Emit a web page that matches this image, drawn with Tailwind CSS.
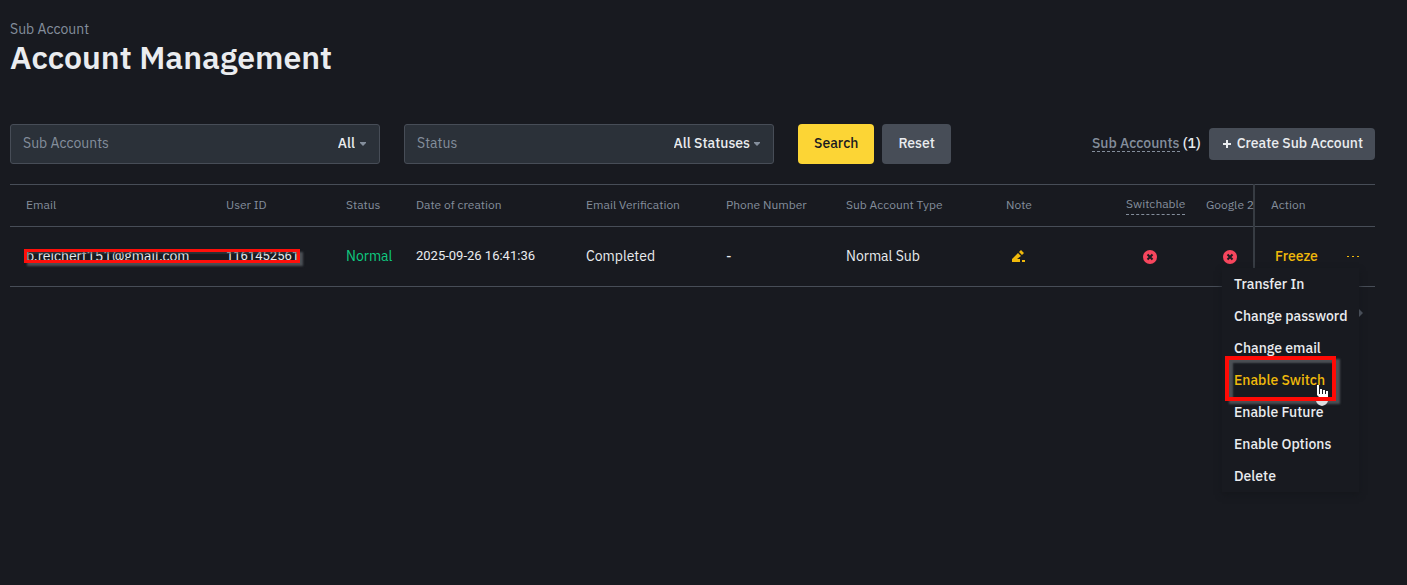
<!DOCTYPE html>
<html lang="en">
  <head>
    <meta charset="UTF-8" />
    <meta name="viewport" content="width=device-width, initial-scale=1.0" />
    <script src="https://cdn.jsdelivr.net/npm/@tailwindcss/browser@4"></script>
    <title>Account Management</title>
  </head>
  <body
    class="min-h-screen bg-[#181a20] pt-5 pr-8 pb-8 pl-[10px] font-['IBM_Plex_Sans',Roboto,sans-serif] text-sm text-[#eaecef]"
  >
    <header>
      <p class="leading-[18px] text-[#848e9c]">Sub Account</p>
      <h1 class="text-[32px] leading-[38px] font-semibold">
        Account Management
      </h1>
    </header>

    <!-- Filters -->
    <div class="mt-12 flex items-start justify-between">
      <form class="flex" onsubmit="return false">
        <div
          class="mr-6 flex h-10 w-[370px] items-center justify-between rounded-[3px] border border-[#474d57] bg-[#2b3139] px-3 pb-0.5"
        >
          <label for="sub-accounts" class="text-[#848e9c]">Sub Accounts</label>
          <div class="flex items-center gap-1">
            <select
              id="sub-accounts"
              class="field-sizing-content appearance-none bg-transparent font-medium"
            >
              <option>All</option>
            </select>
            <svg class="mt-0.5 h-1 w-2 fill-[#848e9c]" viewBox="0 0 8 4">
              <path d="M1 0h6v1L4 4 1 1z" />
            </svg>
          </div>
        </div>
        <div
          class="mr-6 flex h-10 w-[370px] items-center justify-between rounded-[3px] border border-[#474d57] bg-[#2b3139] px-3 pb-0.5"
        >
          <label for="status" class="text-[#848e9c]">Status</label>
          <div class="flex items-center gap-[3px]">
            <select
              id="status"
              class="field-sizing-content appearance-none bg-transparent font-medium"
            >
              <option>All Statuses</option>
            </select>
            <svg class="mt-0.5 h-1 w-2 fill-[#848e9c]" viewBox="0 0 8 4">
              <path d="M1 0h6v1L4 4 1 1z" />
            </svg>
          </div>
        </div>
        <button
          type="submit"
          class="mr-2 h-10 rounded bg-[#fcd535] px-4 pb-0.5 font-medium text-[#181a20]"
        >
          Search
        </button>
        <button
          type="reset"
          class="h-10 rounded bg-[#474d57] px-4 pb-0.5 font-medium"
        >
          Reset
        </button>
      </form>
      <div class="mt-1 flex h-8 items-center">
        <p class="mr-2 pb-0.5 leading-4 font-medium">
          <span
            class="inline-block border-b border-dashed border-[#848e9c] text-[#848e9c]"
            >Sub Accounts</span
          >
          (1)
        </p>
        <button
          class="flex h-8 items-center gap-1 rounded bg-[#474d57] px-3 pb-0.5 font-medium"
        >
          <svg
            class="mt-0.5 h-3 w-3 stroke-[#eaecef] stroke-2"
            viewBox="0 0 12 12"
          >
            <path d="M6 2v8M2 6h8" />
          </svg>
          Create Sub Account
        </button>
      </div>
    </div>

    <!-- Accounts table -->
    <div class="relative mt-5">
      <table class="w-full table-fixed border-y border-[#474d57] text-left">
        <colgroup>
          <col />
          <col class="w-[120px]" />
          <col class="w-[70px]" />
          <col class="w-[170px]" />
          <col class="w-[140px]" />
          <col class="w-[120px]" />
          <col class="w-[160px]" />
          <col class="w-[120px]" />
          <col class="w-[80px]" />
          <col class="w-[64px]" />
          <col class="w-[121px]" />
        </colgroup>
        <thead class="text-xs text-[#848e9c]">
          <tr class="h-[42px] border-b border-[#474d57]">
            <th class="pb-0.5 pl-4 font-normal">Email</th>
            <th class="pb-0.5 pl-4 font-normal">User ID</th>
            <th class="pb-0.5 pl-4 font-normal">Status</th>
            <th class="pb-0.5 pl-4 font-normal">Date of creation</th>
            <th class="pb-0.5 pl-4 font-normal">Email Verification</th>
            <th class="pb-0.5 pl-4 font-normal">Phone Number</th>
            <th class="pb-0.5 pl-4 font-normal">Sub Account Type</th>
            <th class="pb-0.5 pl-4 font-normal">Note</th>
            <th class="pl-4 font-normal">
              <span
                class="inline-block border-b border-dashed border-[#848e9c] pb-0.5"
                >Switchable</span
              >
            </th>
            <th class="pb-0.5 pl-4 font-normal whitespace-nowrap">Google 2</th>
            <th class="border-l-2 border-[#373c43] pb-0.5 pl-4 font-normal">
              Action
            </th>
          </tr>
        </thead>
        <tbody>
          <tr class="h-[60px]">
            <td class="relative pb-0.5 pl-4">
              b.reichert151@gmail.com
              <!-- Red marker over the email and the user id -->
              <div
                class="absolute top-[22px] left-[14px] z-10 h-[14px] w-[276px] border-3 border-[#ff0f0a] shadow-[3px_3px_2px_#4b5055,inset_2px_2px_1px_#3f464a80]"
              ></div>
            </td>
            <td class="pl-4 font-[Roboto] text-[13px]">1161452561</td>
            <td class="pb-0.5 pl-4 text-[#0ecb81]">Normal</td>
            <td class="pl-4 font-[Roboto] text-[13px]">2025-09-26 16:41:36</td>
            <td class="pb-0.5 pl-4">Completed</td>
            <td class="pb-0.5 pl-4">-</td>
            <td class="pb-0.5 pl-4">Normal Sub</td>
            <td class="pl-[22px]">
              <button aria-label="Edit note" class="block">
                <svg class="h-[13px] w-[13px] fill-[#f0b90b]" viewBox="0 0 13 13">
                  <path d="M0 9 6 3l3 3-4 3v3H0zM7 2l2-2 3 3-2 2zM5 9h3v3H5zM10 10h3v2h-3z" />
                </svg>
              </button>
            </td>
            <td class="pl-[33px]">
              <svg class="h-[14px] w-[14px]" viewBox="0 0 14 14">
                <circle cx="7" cy="7" r="7" fill="#f6465d" />
                <path d="m4.5 4.5 5 5m0-5-5 5" stroke="#181a20" stroke-width="2" />
              </svg>
            </td>
            <td class="pl-[33px]">
              <svg class="h-[14px] w-[14px]" viewBox="0 0 14 14">
                <circle cx="7" cy="7" r="7" fill="#f6465d" />
                <path d="m4.5 4.5 5 5m0-5-5 5" stroke="#181a20" stroke-width="2" />
              </svg>
            </td>
            <td
              class="border-l-2 border-[#373c43] pr-4 pb-0.5 pl-5 text-[#f0b90b]"
            >
              <div class="flex items-center justify-between">
                <button class="font-medium">Freeze</button>
                <button aria-label="More actions">
                  <svg class="h-3 w-3 fill-[#f0b90b]" viewBox="0 0 12 12">
                    <path d="M0 6h2v1H0zM5 6h2v1H5zM10 6h2v1h-2z" />
                  </svg>
                </button>
              </div>
            </td>
          </tr>
        </tbody>
      </table>

      <!-- Actions menu -->
      <div
        class="absolute top-[84px] right-4 w-[137px] bg-[#181a20] shadow-[0_3px_6px_#15171c]"
      >
        <ul class="font-medium">
          <li><button class="block h-8 w-full pl-3 text-left">Transfer In</button></li>
          <li><button class="block h-8 w-full pl-3 text-left">Change password</button></li>
          <li><button class="block h-8 w-full pl-3 text-left">Change email</button></li>
          <li class="relative">
            <button class="block h-8 w-full pl-3 text-left text-[#f0b90b]">
              Enable Switch
            </button>
            <div
              class="pointer-events-none absolute -top-2 left-[3px] h-[45px] w-[111px] border-4 border-[#ff0a05] shadow-[4px_3px_2px_#4b5055,inset_4px_3px_2px_#4b5055]"
            ></div>
            <!-- Hand pointer, crossed by the red frame -->
            <svg
              class="pointer-events-none absolute top-5 left-[93px] h-[23px] w-[15px]"
              viewBox="0 0 15 23"
            >
              <path
                d="M2 1h2v6h1V5h2v2h1V6h2v2h1V7h2v6H4L2 11z"
                fill="#fff"
              />
              <path d="M4.500 6v4M7.500 6v4M10.500 7v3" stroke="#181a20" />
              <path d="M1 17h12q-1 4-6 5-5-1-6-5z" fill="#dcdde0" />
            </svg>
          </li>
          <li><button class="block h-8 w-full pl-3 text-left">Enable Future</button></li>
          <li><button class="block h-8 w-full pl-3 text-left">Enable Options</button></li>
          <li><button class="block h-8 w-full pl-3 text-left">Delete</button></li>
        </ul>
        <svg
          class="absolute top-[41px] left-full h-2 w-1 fill-[#474d57]"
          viewBox="0 0 4 8"
        >
          <path d="M0 0 4 4 0 8z" />
        </svg>
      </div>
    </div>
  </body>
</html>
